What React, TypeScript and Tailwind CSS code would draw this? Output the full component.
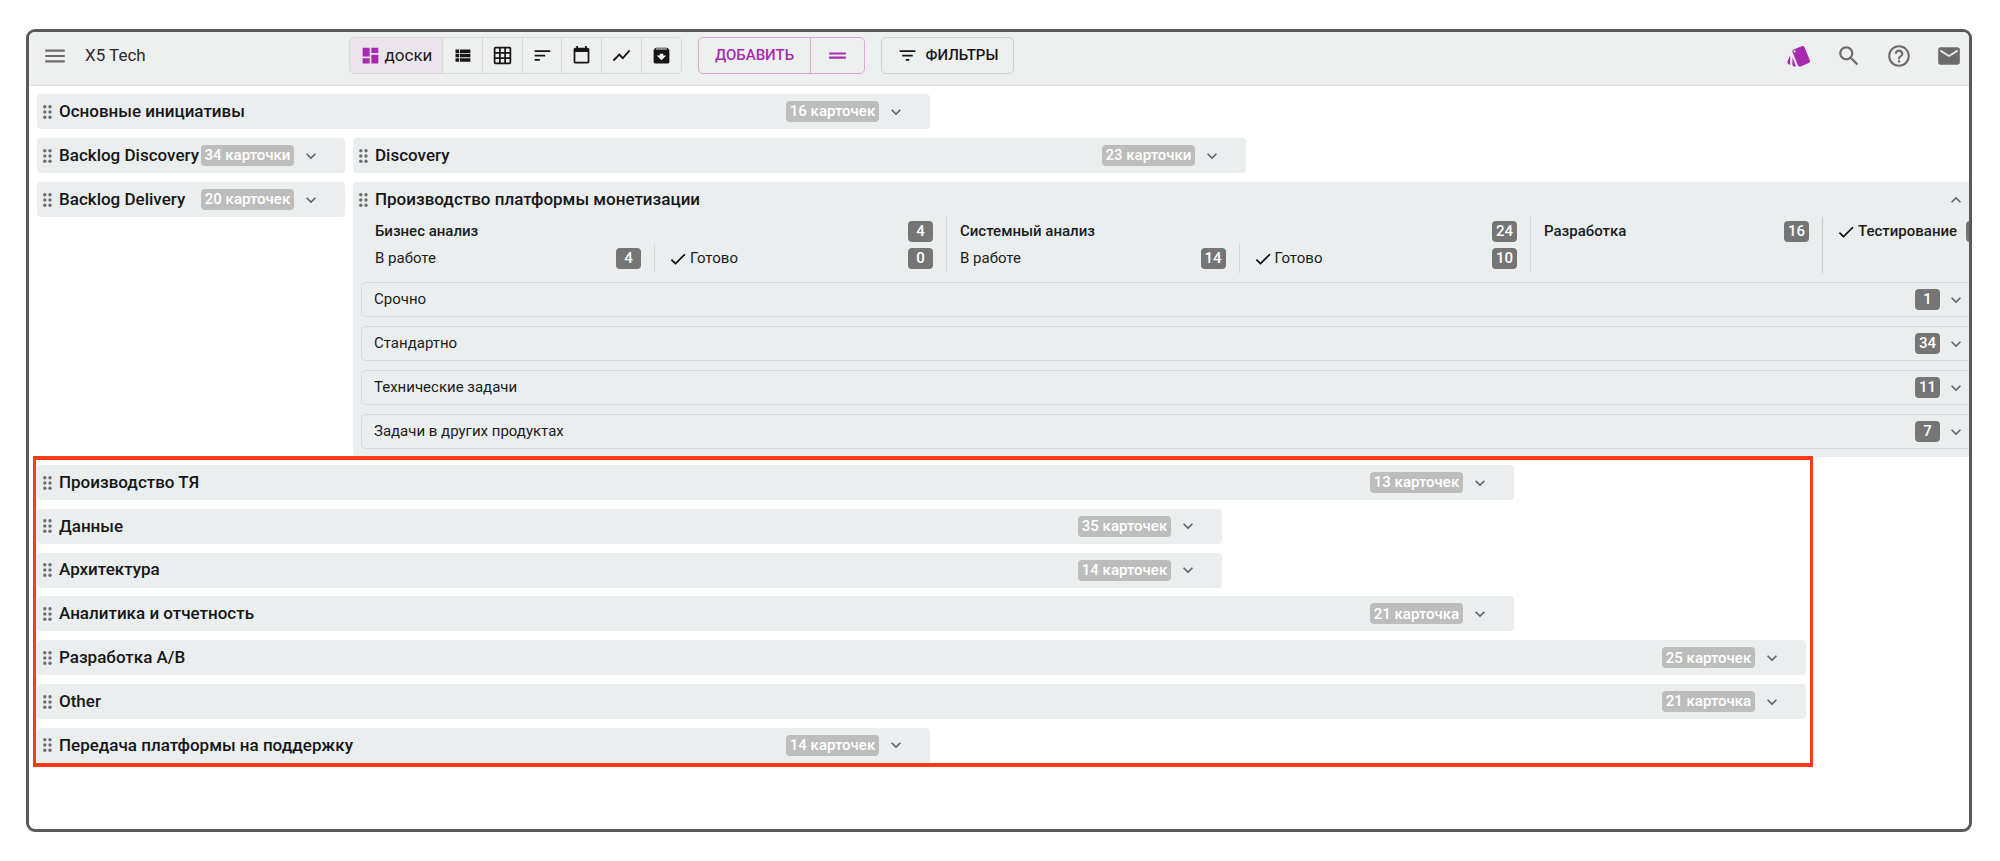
import React from "react";

type IconProps = { d: string; className?: string };

function Icon({ d, className = "size-[21px]" }: IconProps) {
  return (
    <svg viewBox="0 0 24 24" fill="currentColor" aria-hidden="true" className={`shrink-0 ${className}`}>
      <path d={d} />
    </svg>
  );
}

const paths = {
  menu: "M3 18h18v-2H3v2zm0-5h18v-2H3v2zm0-7v2h18V6H3z",
  dashboard: "M13,3V9H21V3M13,21H21V11H13M3,21H11V15H3M3,13H11V3H3V13Z",
  list: "M9,5V9H21V5M9,19H21V15H9M9,14H21V10H9M4,9H8V5H4M4,19H8V15H4M4,14H8V10H4V14Z",
  grid: "M10,4V8H14V4H10M16,4V8H20V4H16M16,10V14H20V10H16M16,16V20H20V16H16M14,20V16H10V20H14M8,20V16H4V20H8M8,14V10H4V14H8M8,8V4H4V8H8M10,14H14V10H10V14M4,2H20A2,2 0 0,1 22,4V20A2,2 0 0,1 20,22H4C2.92,22 2,21.1 2,20V4A2,2 0 0,1 4,2Z",
  sort: "M3 18h6v-2H3v2zM3 6v2h18V6H3zm0 7h12v-2H3v2z",
  calendar:
    "M19,19H5V8H19M16,1V3H8V1H6V3H5C3.89,3 3,3.89 3,5V19A2,2 0 0,0 5,21H19A2,2 0 0,0 21,19V5C21,3.89 20.1,3 19,3H18V1",
  chart: "M3.5 18.49l6-6.01 4 4L22 6.92l-1.41-1.41-7.09 7.97-4-4L2 16.99z",
  archive:
    "M20.54 5.23l-1.39-1.68C18.88 3.21 18.47 3 18 3H6c-.47 0-.88.21-1.16.55L3.46 5.23C3.17 5.57 3 6.02 3 6.5V19c0 1.1.9 2 2 2h14c1.1 0 2-.9 2-2V6.5c0-.48-.17-.93-.46-1.27zM12 17.5L6.5 12H10v-2h4v2h3.5L12 17.5zM5.12 5l.81-1h12l.94 1H5.12z",
  handle: "M20 9H4v2h16V9zM4 15h16v-2H4v2z",
  filter: "M10 18h4v-2h-4v2zM3 6v2h18V6H3zm3 7h12v-2H6v2z",
  cards:
    "M2.53 19.65l1.34.56v-9.03l-2.43 5.86c-.41 1.02.08 2.19 1.09 2.61zm19.5-3.7L17.07 3.98c-.31-.75-1.04-1.21-1.81-1.23-.26 0-.53.04-.79.15L7.1 5.95c-.75.31-1.21 1.03-1.23 1.8-.01.27.04.54.15.8l4.96 11.97c.31.76 1.05 1.22 1.83 1.23.26 0 .52-.05.77-.15l7.36-3.05c1.02-.42 1.51-1.59 1.09-2.6zM7.88 8.75c-.55 0-1-.45-1-1s.45-1 1-1 1 .45 1 1-.45 1-1 1zm-2 11c0 1.1.9 2 2 2h1.45l-3.45-8.34v6.34z",
  search:
    "M15.5 14h-.79l-.28-.27C15.41 12.59 16 11.11 16 9.5 16 5.91 13.09 3 9.5 3S3 5.91 3 9.5 5.91 16 9.5 16c1.61 0 3.09-.59 4.23-1.57l.27.28v.79l5 4.99L20.49 19l-4.99-5zm-6 0C7.01 14 5 11.99 5 9.5S7.01 5 9.5 5 14 7.01 14 9.5 11.99 14 9.5 14z",
  help: "M11 18h2v-2h-2v2zm1-16C6.48 2 2 6.48 2 12s4.48 10 10 10 10-4.48 10-10S17.52 2 12 2zm0 18c-4.41 0-8-3.59-8-8s3.59-8 8-8 8 3.59 8 8-3.59 8-8 8zm0-14c-2.21 0-4 1.79-4 4h2c0-1.1.9-2 2-2s2 .9 2 2c0 2-3 1.75-3 5h2c0-2.25 3-2.5 3-5 0-2.21-1.79-4-4-4z",
  mail: "M20 4H4c-1.1 0-1.99.9-1.99 2L2 18c0 1.1.9 2 2 2h16c1.1 0 2-.9 2-2V6c0-1.1-.9-2-2-2zm0 4l-8 5-8-5V6l8 5 8-5v2z",
  check: "M9 16.17L4.83 12l-1.42 1.41L9 19 21 7l-1.41-1.41z",
  down: "M7.41 8.59L12 13.17l4.59-4.58L18 10l-6 6-6-6 1.41-1.41z",
  up: "M7.41 15.41L12 10.83l4.59 4.58L18 14l-6-6-6 6 1.41 1.41z",
};

function DragHandle() {
  return (
    <svg viewBox="0 0 9 14" fill="currentColor" aria-hidden="true" className="h-[14px] w-[9px] shrink-0 text-[#6b6f70]">
      {[1.8, 7].map((cx) => [1.8, 7, 12.2].map((cy) => <circle key={`${cx}-${cy}`} cx={cx} cy={cy} r="1.7" />))}
    </svg>
  );
}

function Chevron({ open = false, label }: { open?: boolean; label: string }) {
  return (
    <button type="button" aria-label={label} aria-expanded={open} className="shrink-0 text-[#5f6364]">
      <Icon d={open ? paths.up : paths.down} className="size-5" />
    </button>
  );
}

type BoardProps = { title: string; cards: string; width: string };

function Board({ title, cards, width }: BoardProps) {
  return (
    <section className={`flex h-[35px] max-w-full items-center rounded bg-[#eaeeef] pr-6 pl-[6px] ${width}`}>
      <DragHandle />
      <h2 className="ml-[7px] grow text-[17px] font-medium whitespace-nowrap text-[#161616]">{title}</h2>
      <span className="mr-[7px] flex h-[21px] w-[93px] shrink-0 items-center justify-center rounded bg-[#bdbdbd] text-[15px] font-medium whitespace-nowrap text-white">
        {cards}
      </span>
      <Chevron label={title} />
    </section>
  );
}

function Badge({ value }: { value?: number }) {
  return (
    <span className="flex h-[21px] w-[25px] shrink-0 items-center justify-center rounded bg-[#757575] text-[15px] font-medium text-white">
      {value}
    </span>
  );
}

type StageProps = { title: string; value?: number; done?: boolean; bold?: boolean };

function Stage({ title, value, done = false, bold = false }: StageProps) {
  return (
    <div className="flex h-[21px] items-center justify-between px-[13px] text-[15px] whitespace-nowrap text-[#1c1c1c]">
      <span className={`flex items-center gap-[2px] ${bold ? "font-medium" : "font-normal"}`}>
        {done && <Icon d={paths.check} className="size-5 text-black" />}
        {title}
      </span>
      <Badge value={value} />
    </div>
  );
}

type StageGroupProps = { title: string; total: number; working: number; ready: number; divided?: boolean };

function StageGroup({ title, total, working, ready, divided = false }: StageGroupProps) {
  return (
    <div className={`w-[584px] shrink-0 border-[#d3d7d8] pt-1 ${divided ? "border-l" : ""}`}>
      <Stage title={title} value={total} bold />
      <div className="mt-[2px] grid h-[29px] grid-cols-2">
        <div className="pt-1">
          <Stage title="В работе" value={working} />
        </div>
        <div className="border-l border-[#d3d7d8] pt-1">
          <Stage title="Готово" value={ready} done />
        </div>
      </div>
    </div>
  );
}

const lanes = [
  { title: "Срочно", value: 1 },
  { title: "Стандартно", value: 34 },
  { title: "Технические задачи", value: 11 },
  { title: "Задачи в других продуктах", value: 7 },
];

const lowerBoards: BoardProps[] = [
  { title: "Производство ТЯ", cards: "13 карточек", width: "w-[1477px]" },
  { title: "Данные", cards: "35 карточек", width: "w-[1185px]" },
  { title: "Архитектура", cards: "14 карточек", width: "w-[1185px]" },
  { title: "Аналитика и отчетность", cards: "21 карточка", width: "w-[1477px]" },
  { title: "Разработка A/B", cards: "25 карточек", width: "w-[1769px]" },
  { title: "Other", cards: "21 карточка", width: "w-[1769px]" },
  { title: "Передача платформы на поддержку", cards: "14 карточек", width: "w-[893px]" },
];

const views = [
  { label: "Список", d: paths.list },
  { label: "Таблица", d: paths.grid },
  { label: "Сортировка", d: paths.sort },
  { label: "Календарь", d: paths.calendar },
  { label: "График", d: paths.chart },
  { label: "Архив", d: paths.archive },
];

function Header() {
  return (
    <header className="flex h-[54px] items-start border-b border-[#dadcdc] bg-[#eef0f0] pt-[5px] pr-[7px] pl-[13px]">
      <div className="flex h-[37px] w-[307px] shrink-0 items-center gap-[17px]">
        <button type="button" aria-label="Меню" className="text-[#6b6b6b]">
          <Icon d={paths.menu} className="size-[26px]" />
        </button>
        <span className="text-[17px] text-[#2a2a2a]">X5 Tech</span>
      </div>

      <div className="flex h-[37px] w-[333px] shrink-0 divide-x divide-[#d8dada] overflow-hidden rounded-[5px] border border-[#d8dada] text-[#161616]">
        <button type="button" className="flex w-[93px] shrink-0 items-center justify-center gap-1 bg-[#ece4ec] text-[17px] text-[#1c1c1c]">
          <Icon d={paths.dashboard} className="size-[21px] text-[#a72bb0]" />
          доски
        </button>
        {views.map((v) => (
          <button key={v.label} type="button" aria-label={v.label} className="flex flex-1 items-center justify-center">
            <Icon d={v.d} />
          </button>
        ))}
      </div>

      <div className="ml-4 flex h-[37px] shrink-0 divide-x divide-[#d9a3dd] rounded-[5px] border border-[#d9a3dd] text-[#a72bb0]">
        <button type="button" className="w-[112px] text-[15px] font-medium">
          ДОБАВИТЬ
        </button>
        <button type="button" aria-label="Ещё" className="flex w-[53px] items-center justify-center">
          <Icon d={paths.handle} className="size-[25px]" />
        </button>
      </div>

      <button
        type="button"
        className="ml-4 flex h-[37px] w-[133px] shrink-0 items-center justify-center gap-2 rounded-[5px] border border-[#cfd1d1] text-[15px] font-medium text-[#161616]"
      >
        <Icon d={paths.filter} />
        ФИЛЬТРЫ
      </button>

      <div className="ml-auto flex h-[37px] items-center gap-6 text-[#6b6b6b]">
        <button type="button" aria-label="Карточки" className="text-[#a72bb0]">
          <Icon d={paths.cards} className="size-[26px]" />
        </button>
        <button type="button" aria-label="Поиск">
          <Icon d={paths.search} className="size-[26px]" />
        </button>
        <button type="button" aria-label="Помощь">
          <Icon d={paths.help} className="size-[26px]" />
        </button>
        <button type="button" aria-label="Почта">
          <Icon d={paths.mail} className="size-[26px]" />
        </button>
      </div>
    </header>
  );
}

function ExpandedBoard() {
  return (
    <section className="overflow-hidden rounded-l bg-[#eaeeef] pb-2 pl-2">
      <div className="-ml-[2px] flex h-[35px] items-center pr-[3px]">
        <DragHandle />
        <h2 className="ml-[7px] grow text-[17px] font-medium whitespace-nowrap text-[#161616]">
          Производство платформы монетизации
        </h2>
        <Chevron open label="Свернуть" />
      </div>

      <div className="ml-px flex h-14">
        <StageGroup title="Бизнес анализ" total={4} working={4} ready={0} />
        <StageGroup title="Системный анализ" total={24} working={14} ready={10} divided />
        <div className="w-[292px] shrink-0 border-l border-[#d3d7d8] pt-1">
          <Stage title="Разработка" value={16} bold />
        </div>
        <div className="w-[182px] shrink-0 border-l border-[#c8cccd] pt-1">
          <Stage title="Тестирование" done bold />
        </div>
      </div>

      <ul className="mt-[9px] flex flex-col gap-[9px]">
        {lanes.map((lane) => (
          <li
            key={lane.title}
            className="flex h-[35px] items-center rounded-l-[5px] border border-r-0 border-[#d6dadb] pr-[3px] pl-3 text-[15px] text-[#1c1c1c]"
          >
            <span className="grow">{lane.title}</span>
            <Badge value={lane.value} />
            <span className="ml-[6px] flex">
              <Chevron label={lane.title} />
            </span>
          </li>
        ))}
      </ul>
    </section>
  );
}

export default function App() {
  return (
    <div className="bg-white pt-[29px] pr-7 pb-[29px] pl-[26px] font-['Roboto','Liberation_Sans',sans-serif]">
      <div className="overflow-hidden rounded-[9px] border-[3px] border-[#5a5a5a] bg-white">
        <Header />
        <main className="flex flex-col gap-[9px] pt-2 pb-[66px] pl-2">
          <Board title="Основные инициативы" cards="16 карточек" width="w-[893px]" />

          <div className="flex gap-2">
            <div className="flex shrink-0 flex-col gap-[9px]">
              <Board title="Backlog Discovery" cards="34 карточки" width="w-[308px]" />
              <Board title="Backlog Delivery" cards="20 карточек" width="w-[308px]" />
            </div>
            <div className="flex min-w-0 grow flex-col gap-[9px]">
              <Board title="Discovery" cards="23 карточки" width="w-[893px]" />
              <ExpandedBoard />
            </div>
          </div>

          <div className="relative -mt-px flex h-[298px] w-[1769px] max-w-full flex-col justify-between">
            {lowerBoards.map((b) => (
              <Board key={b.title} {...b} />
            ))}
            <div className="pointer-events-none absolute -top-[9px] -right-[7px] -bottom-1 -left-1 border-x-[3px] border-y-4 border-[#fb3a1c]" />
          </div>
        </main>
      </div>
    </div>
  );
}
